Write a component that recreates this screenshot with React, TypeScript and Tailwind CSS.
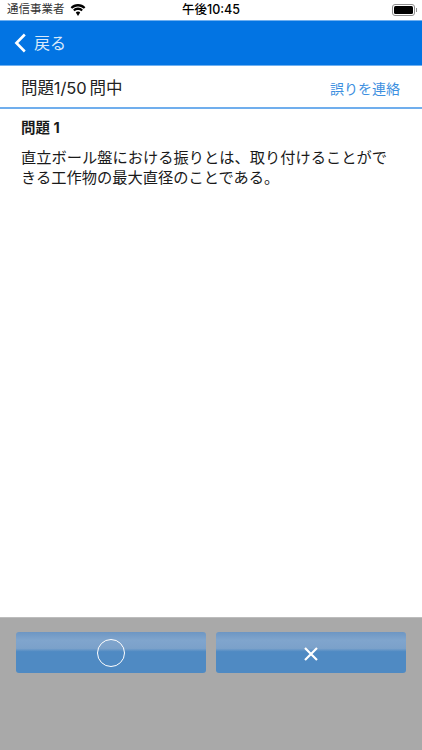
import React from "react";

const jp = "font-['Inter','Noto_Sans_CJK_JP',sans-serif]";

const Wifi = () => (
  <svg width="16" height="12" viewBox="0 0 16 12" fill="#000">
    <path d="M8 2.4c2.3 0 4.4.9 5.9 2.4L15.4 3.2C13.5 1.2 10.9 0 8 0S2.5 1.2.6 3.2l1.5 1.6C3.6 3.3 5.7 2.4 8 2.4z" />
    <path d="M8 5.9c1.3 0 2.5.5 3.4 1.4l1.5-1.6C11.6 4.4 9.9 3.6 8 3.6s-3.6.8-4.9 2.1l1.5 1.6C5.5 6.4 6.7 5.9 8 5.9z" />
    <path d="M8 7.6c-.9 0-1.7.4-2.2.9L8 12l2.2-3.5c-.5-.5-1.3-.9-2.2-.9z" />
  </svg>
);

const Battery = () => (
  <div className="flex items-center">
    <div className="flex h-[12px] w-[23px] rounded-[3px] border border-[#8e8e8e] p-[1px]">
      <div className="flex-1 rounded-[1.5px] bg-black" />
    </div>
    <div className="ml-[1px] h-[4px] w-[1px] bg-[#8e8e8e]" />
  </div>
);

const answerButton =
  "flex h-[41px] flex-1 items-center justify-center rounded-[3px] bg-[linear-gradient(#6d96c3_0%,#80a5cd_20%,#7ba1ca_40%,#4f8ac3_48%,#4f8ac3_100%)]";

export default function App() {
  return (
    <div className={`flex h-[750px] w-[422px] flex-col bg-white ${jp}`}>
      <div className="relative flex h-[20px] items-center justify-between pl-[7px] pr-[5px]">
        <div className="flex items-center gap-[5px]">
          <span className="text-[11.5px] text-[#333]">通信事業者</span>
          <Wifi />
        </div>
        <span className="absolute left-[182px] text-[12.5px] font-medium text-black">午後10:45</span>
        <Battery />
      </div>

      <div className="flex h-[46px] items-center border-y border-[#6fb0f0] bg-[#0274e3] pl-[14px]">
        <svg width="12" height="20" viewBox="0 0 12 20" fill="none" stroke="#fff" strokeWidth="2.6">
          <path d="M10.8 1.5 2.4 10l8.4 8.5" />
        </svg>
        <span className="ml-[8px] text-[16px] text-[#d9e9fa]">戻る</span>
      </div>

      <div className="flex h-[43px] items-center justify-between border-b-2 border-[#70aeed] px-[21px] pt-[3px]">
        <span className="text-[16.5px] tracking-[-0.1px] text-[#222]">
          問題1/50<span className="ml-[3px]">問中</span>
        </span>
        <span className="pr-[1px] text-[14px] text-[#3d8fe0]">誤りを連絡</span>
      </div>

      <div className="flex-1 px-[21px] pt-[8px] text-[#1a1a1a]">
        <div className="text-[14.5px] font-bold leading-[22px]">問題 1</div>
        <p className="mt-[9px] text-[15.25px] leading-[20px]">
          直立ボール盤における振りとは、取り付けることができる工作物の最大直径のことである。
        </p>
      </div>

      <div className="flex h-[133px] items-start gap-[10px] border-t border-[#bdbdbd] bg-[#a9a9a9] px-[16px] pt-[14px]">
        <button className={answerButton}>
          <span className="mr-[1px] h-[28px] w-[28px] rounded-full border border-white" />
        </button>
        <button className={answerButton}>
          <svg width="16" height="16" viewBox="0 0 16 16" fill="none" stroke="#fff" strokeWidth="2.2" className="mt-[3px]">
            <path d="m2 2 12 12M14 2 2 14" />
          </svg>
        </button>
      </div>
    </div>
  );
}
